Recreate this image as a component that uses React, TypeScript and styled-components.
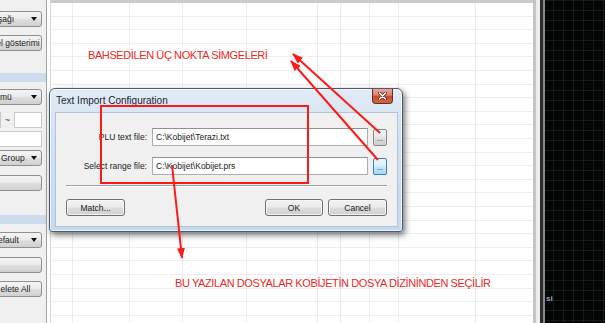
import React from 'react'
import styled, { createGlobalStyle, css } from 'styled-components'

const GlobalStyle = createGlobalStyle`
  html, body {
    margin: 0;
    padding: 0;
  }
  body {
    width: 605px;
    height: 323px;
    overflow: hidden;
    background: #ffffff;
    font-family: 'Liberation Sans', Arial, sans-serif;
  }
`

const Screen = styled.div`
  position: relative;
  display: flex;
  width: 605px;
  height: 323px;
  overflow: hidden;
  background: #ffffff;
`

/* ---------- left property panel ---------- */

const SidePanel = styled.div`
  flex: none;
  display: flex;
  flex-direction: column;
  align-items: flex-end;
  width: 47px;
  box-sizing: border-box;
  border-right: 1px solid #a3a3a3;
  background: #f0f0f0;
  overflow: hidden;
  font-size: 8.5px;
  color: #1c1c1c;
`

const ctrl = css`
  flex: none;
  box-sizing: border-box;
  height: 16px;
  margin-right: 4px;
  border: 1px solid #8e8f8f;
  border-radius: 3px;
  white-space: nowrap;
`

const raised = css`
  background: linear-gradient(#f4f4f4 0%, #ebebeb 45%, #dddddd 55%, #d0d0d0 100%);
`

const DropDown = styled.div<{ $top: number; $w: number }>`
  ${ctrl}
  ${raised}
  margin-top: ${(p) => p.$top}px;
  width: ${(p) => p.$w}px;
  display: flex;
  align-items: center;
  justify-content: space-between;
  padding: 0 4px 0 4px;
`

const Caret = styled.span`
  width: 0;
  height: 0;
  border-left: 3px solid transparent;
  border-right: 3px solid transparent;
  border-top: 4px solid #111111;
`

const PanelButton = styled.div<{ $top: number; $w: number }>`
  ${ctrl}
  ${raised}
  margin-top: ${(p) => p.$top}px;
  width: ${(p) => p.$w}px;
  display: flex;
  align-items: center;
  justify-content: center;
`

const SectionBand = styled.div<{ $top: number }>`
  flex: none;
  align-self: stretch;
  height: 9px;
  margin-top: ${(p) => p.$top}px;
  background: #ccdcee;
`

const RangeRow = styled.div<{ $top: number }>`
  flex: none;
  display: flex;
  align-items: center;
  width: 60px;
  height: 16px;
  margin-top: ${(p) => p.$top}px;
  margin-right: 4px;
`

const PanelInput = styled.div<{ $top?: number; $w: number }>`
  flex: none;
  box-sizing: border-box;
  height: 16px;
  width: ${(p) => p.$w}px;
  margin-top: ${(p) => p.$top ?? 0}px;
  border: 1px solid #c9c9c9;
  background: #ffffff;
`

const WideInput = styled(PanelInput)`
  margin-right: 4px;
`

const Tilde = styled.span`
  flex: none;
  width: 13px;
  text-align: center;
  font-size: 9px;
  color: #444444;
`

/* ---------- grid canvas ---------- */

const Gutter = styled.div`
  flex: none;
  width: 3px;
  background: #ffffff;
`

const GridArea = styled.div`
  flex: 1;
  display: flex;
  flex-direction: column;
  border-left: 1px solid #d6d6d6;
`

const GridHeader = styled.div`
  flex: none;
  height: 3px;
  background: #cbcbcb;
`

const GridColumns = styled.div`
  flex: 1;
  display: flex;
`

const GridColumn = styled.div<{ $w?: number }>`
  box-sizing: border-box;
  ${(p) => (p.$w ? `flex: none; width: ${p.$w}px;` : 'flex: 1;')}
  border-right: 1px solid #ebebeb;
  background: repeating-linear-gradient(
    to bottom,
    transparent 0,
    transparent 12.6px,
    #eeeeee 12.6px,
    #eeeeee 13.6px
  );

  &:last-child {
    border-right: none;
  }
`

const ScrollEdge = styled.div`
  flex: none;
  width: 7px;
  box-sizing: border-box;
  border-left: 3px solid #c4c4c4;
  background: #ececec;
`

const DarkPane = styled.div`
  flex: none;
  width: 65px;
  box-sizing: border-box;
  border-left: 3px solid #2c2c2c;
  box-shadow: inset 2px 0 0 #8a8a8a;
  background-color: #040605;
  background-image: linear-gradient(90deg, rgba(40, 72, 52, 0.35) 1px, transparent 1px),
    linear-gradient(rgba(40, 72, 52, 0.35) 1px, transparent 1px);
  background-size: 10px 10px;
  display: flex;
  flex-direction: column;
  justify-content: flex-end;
  padding: 0 0 20px 3px;
`

const DarkLabel = styled.span`
  font-size: 8px;
  font-weight: bold;
  color: #8ea2c2;
`

/* ---------- dialog ---------- */

const Dialog = styled.div`
  position: absolute;
  left: 49px;
  top: 88px;
  width: 354px;
  height: 144px;
  box-sizing: border-box;
  display: flex;
  flex-direction: column;
  padding: 0 4px 4px 5px;
  border: 1px solid #4d5b6e;
  border-radius: 6px 6px 3px 3px;
  background: linear-gradient(#e2ebf6 0%, #d3e2f2 30%, #c6d9ef 100%);
  box-shadow: 2px 3px 6px rgba(0, 0, 0, 0.55), inset 0 0 0 1px rgba(255, 255, 255, 0.6);
`

const TitleBar = styled.div`
  flex: none;
  height: 23px;
  display: flex;
  align-items: center;
  justify-content: space-between;
  padding-left: 1px;
  font-size: 10px;
  color: #1b2433;
`

const CloseButton = styled.div`
  align-self: flex-start;
  display: flex;
  align-items: center;
  justify-content: center;
  width: 21px;
  height: 15px;
  margin-right: 5px;
  box-sizing: border-box;
  border: 1px solid #6e2a1f;
  border-top: none;
  border-radius: 0 0 4px 4px;
  background: linear-gradient(#eaa897 0%, #d9806b 45%, #c64a2f 50%, #d4673f 100%);
`

const Client = styled.div`
  flex: 1;
  display: flex;
  flex-direction: column;
  box-sizing: border-box;
  padding: 15px 10px 0 9px;
  border: 1px solid #b3c3d6;
  background: #f0f0f0;
  font-size: 8.5px;
  color: #1a1a1a;
`

const FileGrid = styled.div`
  display: grid;
  grid-template-columns: 82px 216px 14px;
  grid-auto-rows: 18px;
  column-gap: 5px;
  row-gap: 11px;
  align-items: center;
`

const FieldLabel = styled.span`
  text-align: right;
  white-space: nowrap;
`

const PathInput = styled.div`
  height: 18px;
  box-sizing: border-box;
  display: flex;
  align-items: center;
  padding-left: 3px;
  border: 1px solid #abadb3;
  border-top-color: #8e9196;
  background: #ffffff;
  white-space: nowrap;
`

const BrowseButton = styled.div<{ $hot?: boolean }>`
  height: 17px;
  box-sizing: border-box;
  display: flex;
  align-items: flex-end;
  justify-content: center;
  padding-bottom: 3px;
  border: 1px solid ${(p) => (p.$hot ? '#3c7fb1' : '#8a8a8a')};
  border-radius: 2px;
  background: ${(p) =>
    p.$hot
      ? 'linear-gradient(#eaf6fd 0%, #d9f0fc 45%, #bee6fd 55%, #a7d9f5 100%)'
      : 'linear-gradient(#f4f4f4 0%, #ebebeb 45%, #dddddd 55%, #cfcfcf 100%)'};
  font-size: 8px;
  line-height: 6px;
  color: #333333;
`

const Separator = styled.div`
  margin: 10px 0 0 1px;
  border-top: 1px solid #a0a0a0;
  border-bottom: 1px solid #ffffff;
`

const ButtonRow = styled.div`
  display: flex;
  gap: 5px;
  margin: 12px 0 0 1px;
`

const Spacer = styled.div`
  flex: 1;
`

const DialogButton = styled.div<{ $w: number }>`
  width: ${(p) => p.$w}px;
  height: 17px;
  box-sizing: border-box;
  display: flex;
  align-items: center;
  justify-content: center;
  border: 1px solid #707070;
  border-radius: 3px;
  background: linear-gradient(#f2f2f2 0%, #ebebeb 45%, #dddddd 55%, #cfcfcf 100%);
  box-shadow: inset 0 0 0 1px rgba(255, 255, 255, 0.7);
`

/* ---------- red annotations ---------- */

const Markup = styled.svg`
  position: absolute;
  left: 0;
  top: 0;
  pointer-events: none;
`

const Note = styled.div<{ $x: number; $y: number }>`
  position: absolute;
  left: ${(p) => p.$x}px;
  top: ${(p) => p.$y}px;
  font-size: 11px;
  line-height: 11px;
  letter-spacing: -0.4px;
  color: #f02828;
  white-space: nowrap;
`

const RED = '#ff1a1a'

const columnWidths = [22, 57, 53, 64, 71, 23, 29, 29, 77]

export default function App() {
  return (
    <>
      <GlobalStyle />
      <Screen>
        <SidePanel>
          <DropDown $top={11} $w={49}>
            <span>şağı</span>
            <Caret />
          </DropDown>
          <PanelButton $top={8} $w={48}>
            el gösterimi
          </PanelButton>
          <SectionBand $top={22} />
          <DropDown $top={7} $w={49}>
            <span>imü</span>
            <Caret />
          </DropDown>
          <RangeRow $top={7}>
            <PanelInput $w={19} />
            <Tilde>~</Tilde>
            <PanelInput $w={28} />
          </RangeRow>
          <WideInput $top={3} $w={50} />
          <DropDown $top={3} $w={46}>
            <span>Group</span>
            <Caret />
          </DropDown>
          <PanelButton $top={9} $w={50} />
          <SectionBand $top={24} />
          <DropDown $top={8} $w={49}>
            <span>efault</span>
            <Caret />
          </DropDown>
          <PanelButton $top={9} $w={50} />
          <PanelButton $top={8} $w={53}>
            elete All
          </PanelButton>
        </SidePanel>

        <Gutter />

        <GridArea>
          <GridHeader />
          <GridColumns>
            {columnWidths.map((w, i) => (
              <GridColumn key={i} $w={w} />
            ))}
            <GridColumn />
          </GridColumns>
        </GridArea>

        <ScrollEdge />
        <DarkPane>
          <DarkLabel>si</DarkLabel>
        </DarkPane>

        <Dialog>
          <TitleBar>
            <span>Text Import Configuration</span>
            <CloseButton>
              <svg width="9" height="8" viewBox="0 0 9 8">
                <path d="M1.5 1 L7.5 7 M7.5 1 L1.5 7" stroke="#5a1d12" strokeWidth="3" strokeLinecap="round" />
                <path d="M1.5 1 L7.5 7 M7.5 1 L1.5 7" stroke="#ffffff" strokeWidth="1.6" strokeLinecap="round" />
              </svg>
            </CloseButton>
          </TitleBar>
          <Client>
            <FileGrid>
              <FieldLabel>PLU text file:</FieldLabel>
              <PathInput>C:\Kobijet\Terazi.txt</PathInput>
              <BrowseButton>...</BrowseButton>
              <FieldLabel>Select range file:</FieldLabel>
              <PathInput>C:\Kobijet\Kobijet.prs</PathInput>
              <BrowseButton $hot>...</BrowseButton>
            </FileGrid>
            <Separator />
            <ButtonRow>
              <DialogButton $w={59}>Match...</DialogButton>
              <Spacer />
              <DialogButton $w={58}>OK</DialogButton>
              <DialogButton $w={59}>Cancel</DialogButton>
            </ButtonRow>
          </Client>
        </Dialog>

        <Markup width="605" height="323" viewBox="0 0 605 323">
          <defs>
            <marker
              id="head"
              markerWidth="11"
              markerHeight="8"
              refX="10"
              refY="4"
              orient="auto"
              markerUnits="userSpaceOnUse"
            >
              <path d="M0 0 L11 4 L0 8 Z" fill={RED} />
            </marker>
          </defs>
          <rect x="101" y="106" width="207" height="77" fill="none" stroke={RED} strokeWidth="2" />
          <line x1="380" y1="133" x2="293" y2="54" stroke={RED} strokeWidth="2" markerEnd="url(#head)" />
          <line x1="378" y1="160" x2="291" y2="61" stroke={RED} strokeWidth="2" markerEnd="url(#head)" />
          <line x1="172" y1="165" x2="182" y2="258" stroke={RED} strokeWidth="2" markerEnd="url(#head)" />
        </Markup>

        <Note $x={88} $y={50}>BAHSEDİLEN ÜÇ NOKTA SİMGELERİ</Note>
        <Note $x={175} $y={278}>BU YAZILAN DOSYALAR KOBİJETİN DOSYA DİZİNİNDEN SEÇİLİR</Note>
      </Screen>
    </>
  )
}
